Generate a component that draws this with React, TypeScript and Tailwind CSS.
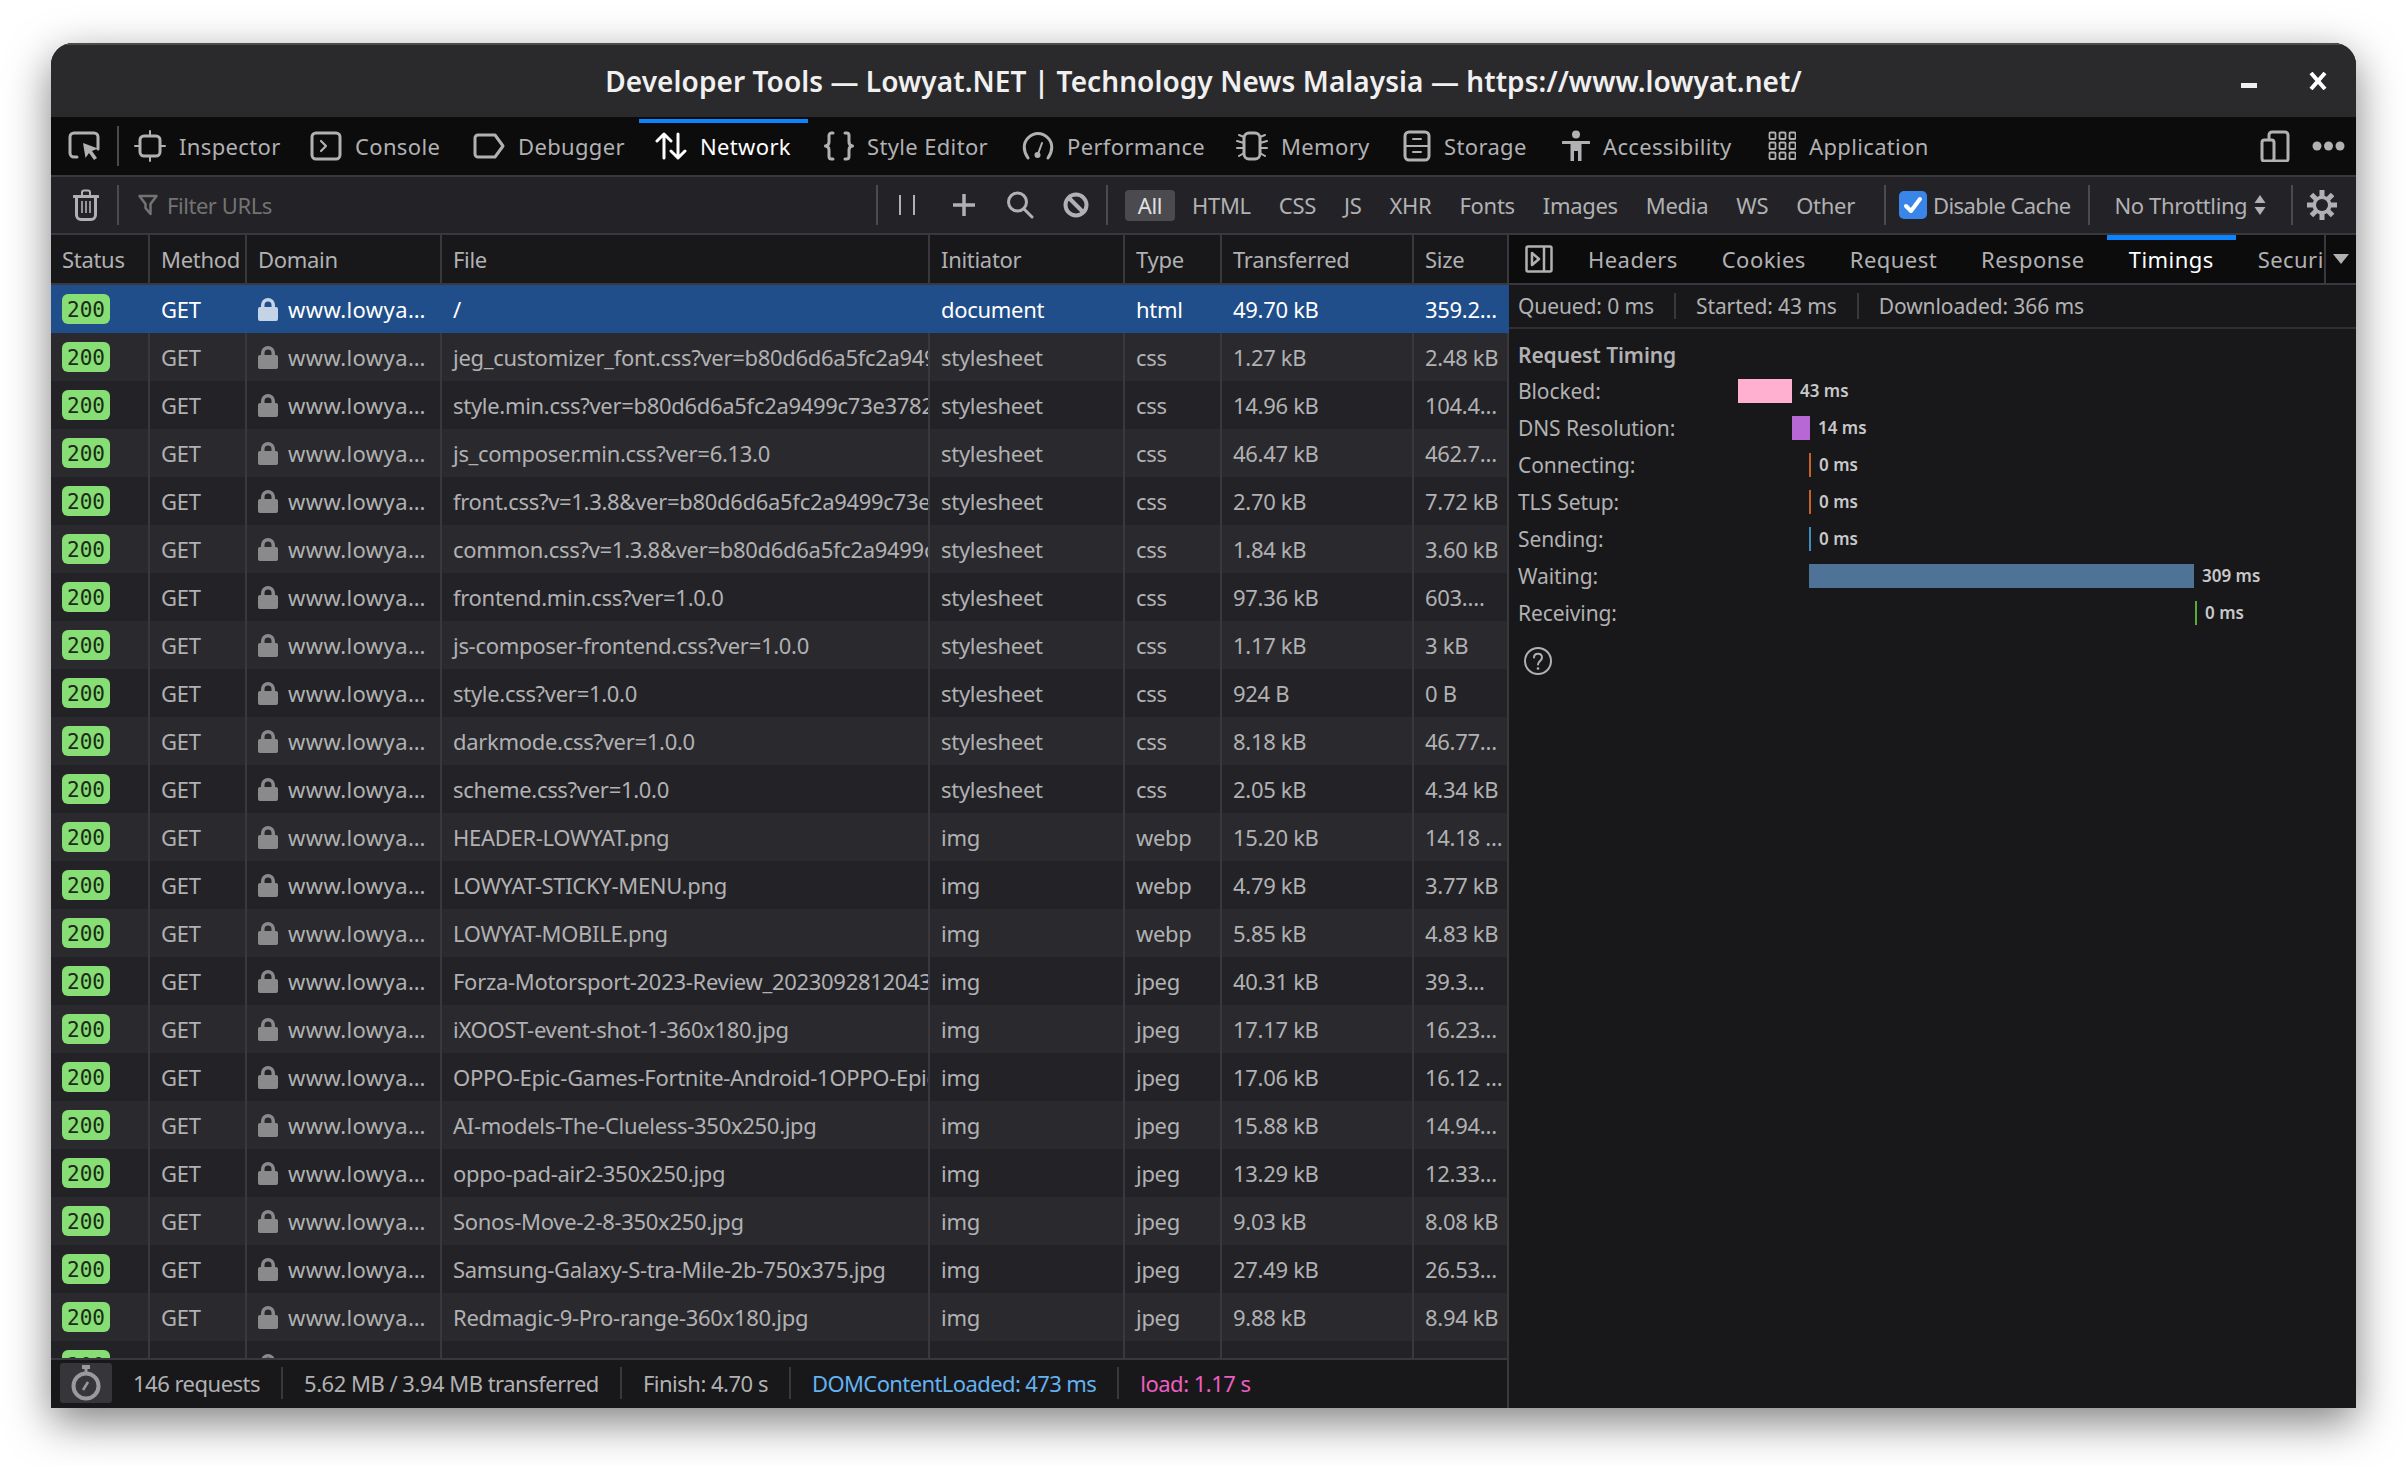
import React from "react";

const font = { fontFamily: '"Noto Sans", sans-serif' };

const S = ({ w, h, children, className = "" }: { w: number; h: number; children: React.ReactNode; className?: string }) => (
  <svg width={w} height={h} viewBox={`0 0 ${w} ${h}`} fill="none" stroke="currentColor" strokeWidth={3} strokeLinecap="round" strokeLinejoin="round" className={`shrink-0 ${className}`}>
    {children}
  </svg>
);

const PickIcon = () => (
  <S w={32} h={30}>
    <path d="M9 26H6a4 4 0 0 1-4-4V6a4 4 0 0 1 4-4h20a4 4 0 0 1 4 4v12" />
    <path d="M15 12l15 5.5-6 2.5 5 7-3 2-5-7-3.5 5z" fill="currentColor" stroke="none" />
  </S>
);
const InspectorIcon = () => (
  <S w={32} h={32}>
    <rect x="6" y="6" width="20" height="20" rx="4" />
    <path d="M16 1v5M16 26v5M1 16h5M26 16h5" strokeWidth={2} />
  </S>
);
const ConsoleIcon = () => (
  <S w={32} h={30}>
    <rect x="2" y="2" width="28" height="26" rx="4" />
    <path d="M11 10l5 5-5 5" strokeWidth={2.2} />
  </S>
);
const DebuggerIcon = () => (
  <S w={32} h={26}>
    <path d="M5 2h17l8 11-8 11H5a3 3 0 0 1-3-3V5a3 3 0 0 1 3-3z" />
  </S>
);
const NetworkIcon = () => (
  <S w={32} h={30} className="text-white">
    <path d="M9 27V3M2 10l7-7 7 7" />
    <path d="M23 3v24M16 20l7 7 7-7" />
  </S>
);
const StyleIcon = () => (
  <S w={30} h={30}>
    <path d="M9 2H7.500a2.500 2.500 0 0 0-2.500 2.500V11a4 4 0 0 1-3.500 4 4 4 0 0 1 3.500 4v6.500a2.500 2.500 0 0 0 2.500 2.500H9" />
    <path d="M21 2h1.500a2.500 2.500 0 0 1 2.500 2.500V11a4 4 0 0 0 3.500 4 4 4 0 0 0-3.500 4v6.500a2.500 2.500 0 0 1-2.500 2.500H21" />
  </S>
);
const PerfIcon = () => (
  <S w={32} h={30}>
    <path d="M6 27C1 20 1 12 6 7c6-6 14-6 20 0 5 5 5 13 0 20" />
    <path d="M16 23l4-11" strokeWidth={2} />
    <circle cx="15.500" cy="24" r="3" fill="currentColor" stroke="none" />
  </S>
);
const MemoryIcon = () => (
  <S w={32} h={30}>
    <rect x="8" y="2" width="16" height="26" rx="5" />
    <path d="M8 6L3 4M8 12L1 10M8 17H1M8 22L3 25M24 6l5-2M24 12l7-2M24 17h7M24 22l5 3" strokeWidth={2} />
  </S>
);
const StorageIcon = () => (
  <S w={28} h={32}>
    <rect x="2" y="2" width="24" height="28" rx="4" />
    <path d="M3 16h22" strokeWidth={2} />
    <path d="M10 9h8M10 22h8" strokeWidth={2} />
  </S>
);
const AccessIcon = () => (
  <svg width="28" height="32" viewBox="0 0 28 32" fill="currentColor" className="shrink-0">
    <circle cx="14" cy="4.500" r="4" />
    <path d="M1 11h26a1.500 1.500 0 0 1 0 3h-7.500v17h-3.500v-10h-4v10H8.500V14H1a1.500 1.500 0 0 1 0-3z" />
  </svg>
);
const AppIcon = () => (
  <S w={28} h={30}>
    {[2, 12, 22].flatMap((y) =>
      [2, 12, 22].map((x) => <rect key={`${x}-${y}`} x={x - 0.5} y={y - 0.5} width="6" height="6.500" rx="1" strokeWidth={1.8} />)
    )}
  </S>
);
const DeviceIcon = () => (
  <S w={30} h={32}>
    <path d="M9 9V5a3 3 0 0 1 3-3h13a3 3 0 0 1 3 3v24a2 2 0 0 1-2 2H14" />
    <rect x="2" y="10" width="12" height="21" rx="2.500" />
  </S>
);
const TrashIcon = () => (
  <S w={26} h={32}>
    <path d="M1 7.500h24" />
    <path d="M9 6V3.500a2 2 0 0 1 2-2h4a2 2 0 0 1 2 2V6" strokeWidth={2} />
    <path d="M3.500 8v18a4.500 4.500 0 0 0 4.500 4.500h10a4.500 4.500 0 0 0 4.500-4.500V8" />
    <path d="M9 12v12M13 12v12M17 12v12" strokeWidth={1.6} strokeLinecap="butt" />
  </S>
);
const FilterIcon = () => (
  <S w={20} h={22} className="text-[#737373]">
    <path d="M1.500 2h17L12.500 10v10L7.500 14V10z" strokeWidth={2.5} />
  </S>
);
const SearchIcon = () => (
  <S w={28} h={28}>
    <circle cx="11.500" cy="11" r="9" />
    <path d="M18 18l8 8" />
  </S>
);
const BlockIcon = () => (
  <S w={26} h={26} className="text-[#b1b1b3]">
    <circle cx="13" cy="13" r="10.500" strokeWidth={4} />
    <path d="M6 6l14 14" strokeWidth={4} strokeLinecap="butt" />
  </S>
);
const GearIcon = () => (
  <svg width="34" height="34" viewBox="0 0 34 34" className="shrink-0">
    <g stroke="#b1b1b3" strokeWidth="5" strokeLinecap="butt">
      {[0, 45, 90, 135].map((a) => (
        <line key={a} x1="17" y1="2" x2="17" y2="32" transform={`rotate(${a} 17 17)`} />
      ))}
    </g>
    <circle cx="17" cy="17" r="9.500" fill="#b1b1b3" />
    <circle cx="17" cy="17" r="6" fill="#232327" />
  </svg>
);

const tabs: [string, React.ReactNode, number, string][] = [
  ["Inspector", <InspectorIcon />, 0, "w-[176px]"],
  ["Console", <ConsoleIcon />, 0, "w-[163px]"],
  ["Debugger", <DebuggerIcon />, 0, "w-[182px]"],
  ["Network", <NetworkIcon />, 1, "w-[169px]"],
  ["Style Editor", <StyleIcon />, 0, "w-[198px]"],
  ["Performance", <PerfIcon />, 0, "w-[214px]"],
  ["Memory", <MemoryIcon />, 0, "w-[167px]"],
  ["Storage", <StorageIcon />, 0, "w-[159px]"],
  ["Accessibility", <AccessIcon />, 0, "w-[206px]"],
  ["Application", <AppIcon />, 0, "w-[194px]"],
];

const filters = ["HTML", "CSS", "JS", "XHR", "Fonts", "Images", "Media", "WS", "Other"];

const rows: [string, string, string, string, string][] = [
  ["/", "document", "html", "49.70 kB", "359.2…"],
  ["jeg_customizer_font.css?ver=b80d6d6a5fc2a9499c73e3782", "stylesheet", "css", "1.27 kB", "2.48 kB"],
  ["style.min.css?ver=b80d6d6a5fc2a9499c73e3782", "stylesheet", "css", "14.96 kB", "104.4…"],
  ["js_composer.min.css?ver=6.13.0", "stylesheet", "css", "46.47 kB", "462.7…"],
  ["front.css?v=1.3.8&ver=b80d6d6a5fc2a9499c73e3782", "stylesheet", "css", "2.70 kB", "7.72 kB"],
  ["common.css?v=1.3.8&ver=b80d6d6a5fc2a9499c73e3782", "stylesheet", "css", "1.84 kB", "3.60 kB"],
  ["frontend.min.css?ver=1.0.0", "stylesheet", "css", "97.36 kB", "603.…"],
  ["js-composer-frontend.css?ver=1.0.0", "stylesheet", "css", "1.17 kB", "3 kB"],
  ["style.css?ver=1.0.0", "stylesheet", "css", "924 B", "0 B"],
  ["darkmode.css?ver=1.0.0", "stylesheet", "css", "8.18 kB", "46.77…"],
  ["scheme.css?ver=1.0.0", "stylesheet", "css", "2.05 kB", "4.34 kB"],
  ["HEADER-LOWYAT.png", "img", "webp", "15.20 kB", "14.18 …"],
  ["LOWYAT-STICKY-MENU.png", "img", "webp", "4.79 kB", "3.77 kB"],
  ["LOWYAT-MOBILE.png", "img", "webp", "5.85 kB", "4.83 kB"],
  ["Forza-Motorsport-2023-Review_20230928120431-360x180.jpg", "img", "jpeg", "40.31 kB", "39.3…"],
  ["iXOOST-event-shot-1-360x180.jpg", "img", "jpeg", "17.17 kB", "16.23…"],
  ["OPPO-Epic-Games-Fortnite-Android-1OPPO-Epic-Games.jpg", "img", "jpeg", "17.06 kB", "16.12 …"],
  ["AI-models-The-Clueless-350x250.jpg", "img", "jpeg", "15.88 kB", "14.94…"],
  ["oppo-pad-air2-350x250.jpg", "img", "jpeg", "13.29 kB", "12.33…"],
  ["Sonos-Move-2-8-350x250.jpg", "img", "jpeg", "9.03 kB", "8.08 kB"],
  ["Samsung-Galaxy-S-tra-Mile-2b-750x375.jpg", "img", "jpeg", "27.49 kB", "26.53…"],
  ["Redmagic-9-Pro-range-360x180.jpg", "img", "jpeg", "9.88 kB", "8.94 kB"],
  ["", "", "", "", ""],
];

const timings: [string, number, number, string, string][] = [
  ["Blocked:", 0, 54, "#ffb0d0", "43 ms"],
  ["DNS Resolution:", 54, 18, "#b868d4", "14 ms"],
  ["Connecting:", 71, 2, "#c8602a", "0 ms"],
  ["TLS Setup:", 71, 2, "#c8602a", "0 ms"],
  ["Sending:", 71, 2, "#3a8ec2", "0 ms"],
  ["Waiting:", 71, 385, "#4f7297", "309 ms"],
  ["Receiving:", 457, 2, "#5aa838", "0 ms"],
];

const Sep = ({ className = "" }: { className?: string }) => <div className={`w-[2px] h-[40px] bg-[#4a4a4f] shrink-0 ${className}`} />;
const FootSep = () => <div className="w-[2px] h-[32px] bg-[#38383d] shrink-0" />;

const Cell = ({ children, sel }: { children?: React.ReactNode; sel: boolean }) => (
  <div className={`h-[48px] pl-[11px] flex items-center overflow-hidden whitespace-nowrap border-r-2 ${sel ? "border-transparent" : "border-[#38383d]"}`}>
    {children}
  </div>
);

export default function App() {
  return (
    <div className="w-[2406px] h-[1466px] bg-white pt-[43px] pl-[51px] overflow-hidden" style={font}>
      <div className="w-[2305px] h-[1365px] flex flex-col rounded-t-[22px] overflow-hidden bg-[#18181a] shadow-[0_14px_44px_rgba(0,0,0,0.5)] text-[22px] leading-[30px] text-[#b1b1b3] tracking-[-0.3px]">
        {/* title bar */}
        <div className="h-[74px] shrink-0 bg-[#2a2a2c] border-t-2 border-[#4c4c4e] grid grid-cols-[1fr_auto_1fr] items-center">
          <div />
          <div className="text-[28px] font-semibold text-[#f0f0f0] tracking-[0.07px]">
            Developer Tools — Lowyat.NET | Technology News Malaysia — https://www.lowyat.net/
          </div>
          <div className="flex items-center justify-end pr-[29px] gap-[52px] text-white">
            <svg width="16" height="5" viewBox="0 0 16 5" className="mt-[8px]"><rect width="16" height="5" fill="#f0f0f0" /></svg>
            <svg width="18" height="18" viewBox="0 0 18 18" stroke="#ffffff" strokeWidth="4"><path d="M2 1l14 16M16 1L2 17" /></svg>
          </div>
        </div>

        {/* tabs */}
        <div className="h-[60px] shrink-0 bg-[#0c0c0d] border-b-2 border-[#38383d] flex items-center tracking-[0.35px]">
          <div className="flex items-center h-full pl-[17px] -mr-[1px]">
            <PickIcon />
            <Sep className="ml-[17px]" />
          </div>
          {tabs.map(([label, icon, active, width]) => (
            <div key={label} className={`relative h-full flex items-center gap-[13px] pl-[16px] shrink-0 whitespace-nowrap ${width} ${active ? "text-white" : ""}`}>
              {active ? <div className="absolute left-0 right-0 top-[2px] h-[4px] bg-[#0a84ff]" /> : null}
              {icon}
              <span>{label}</span>
            </div>
          ))}
          <div className="ml-auto flex items-center gap-[22px] pr-[11px]">
            <DeviceIcon />
            <svg width="33" height="10" viewBox="0 0 33 10" fill="currentColor"><circle cx="5" cy="5" r="4.500" /><circle cx="16.500" cy="5" r="4.500" /><circle cx="28" cy="5" r="4.500" /></svg>
          </div>
        </div>

        {/* toolbar */}
        <div className="h-[58px] shrink-0 bg-[#232327] border-b-2 border-[#38383d] flex items-center">
          <div className="pl-[22px]"><TrashIcon /></div>
          <Sep className="ml-[18px]" />
          <div className="w-[757px] flex items-center gap-[9px] pl-[19px] text-[#737373] tracking-[-0.45px]">
            <FilterIcon />
            <span>Filter URLs</span>
          </div>
          <Sep />
          <div className="flex items-center pl-[21px] w-[228px]">
            <svg width="16" height="20" viewBox="0 0 16 20" stroke="currentColor" strokeWidth="2"><path d="M1 0v20M15 0v20" /></svg>
            <svg width="24" height="24" viewBox="0 0 24 24" stroke="currentColor" strokeWidth="3.5" className="ml-[37px]"><path d="M12 1v22M1 12h22" /></svg>
            <div className="ml-[30px]"><SearchIcon /></div>
            <div className="ml-[29px]"><BlockIcon /></div>
          </div>
          <Sep />
          <div className="flex items-center pl-[17px]">
            <div className="w-[50px] h-[31px] rounded-[4px] bg-[#4a4a4f] text-center text-[#e0e0e2] leading-[31px]">All</div>
            <div className="flex items-center pl-[3px]">
              {filters.map((f) => (
                <span key={f} className="px-[14px]">{f}</span>
              ))}
            </div>
          </div>
          <Sep className="ml-[15px]" />
          <div className="flex items-center gap-[6px] pl-[13px] pr-[17px] tracking-[-0.55px]">
            <div className="w-[28px] h-[28px] rounded-[5px] bg-[#3a86e8] flex items-center justify-center">
              <svg width="20" height="18" viewBox="0 0 20 18" fill="none" stroke="#fff" strokeWidth="4" strokeLinecap="round" strokeLinejoin="round"><path d="M3 10l5 5L17 3" /></svg>
            </div>
            <span>Disable Cache</span>
          </div>
          <Sep />
          <div className="flex items-center gap-[7px] pl-[25px] pr-[25px] tracking-[-0.4px]">
            <span>No Throttling</span>
            <svg width="12" height="22" viewBox="0 0 12 22" fill="currentColor"><path d="M6 1l5.500 8H.5zM6 21l5.500-8H.5z" /></svg>
          </div>
          <Sep />
          <div className="pl-[12px]"><GearIcon /></div>
        </div>

        {/* main split */}
        <div className="flex-1 min-h-0 flex">
          {/* left */}
          <div className="w-[1458px] shrink-0 flex flex-col">
            <div className="h-[50px] shrink-0 bg-[#18181a] border-b-2 border-[#38383d] grid grid-cols-[99px_97px_195px_488px_195px_97px_192px_95px]">
              {["Status", "Method", "Domain", "File", "Initiator", "Type", "Transferred", "Size"].map((h) => (
                <div key={h} className="pl-[11px] flex items-center border-r-2 border-[#38383d]">{h}</div>
              ))}
            </div>
            <div className="flex-1 min-h-0 overflow-hidden">
              {rows.map((r, i) => {
                const sel = i === 0;
                return (
                  <div key={i} className={`grid grid-cols-[99px_97px_195px_488px_195px_97px_192px_95px] ${sel ? "bg-[#204e8a] text-white" : i % 2 ? "bg-[#2a2a2e]" : "bg-[#232327]"}`}>
                    <Cell sel={sel}>
                      <span className="w-[48px] h-[30px] rounded-[6px] bg-[#86de74] text-[#1c2b18] text-center text-[21px] leading-[32px] tracking-normal" style={{ fontFamily: '"DejaVu Sans Mono", monospace' }}>200</span>
                    </Cell>
                    <Cell sel={sel}>GET</Cell>
                    <Cell sel={sel}>
                      <svg width="20" height="24" viewBox="0 0 20 24" className="shrink-0 mr-[10px]" fill={sel ? "#c5d3e6" : "#8a8a8d"}>
                        <path d="M3 10V8a7 7 0 0 1 14 0v2h1a2 2 0 0 1 2 2v10a2 2 0 0 1-2 2H2a2 2 0 0 1-2-2V12a2 2 0 0 1 2-2zm3.500 0h7V8a3.500 3.500 0 0 0-7 0z" />
                      </svg>
                      <span className="tracking-[0.4px]">www.lowya…</span>
                    </Cell>
                    <Cell sel={sel}>{r[0]}</Cell>
                    <Cell sel={sel}>{r[1]}</Cell>
                    <Cell sel={sel}>{r[2]}</Cell>
                    <Cell sel={sel}>{r[3]}</Cell>
                    <Cell sel={sel}>{r[4]}</Cell>
                  </div>
                );
              })}
            </div>
            {/* footer */}
            <div className="h-[50px] shrink-0 bg-[#18181a] border-t-2 border-r-2 border-[#38383d] flex items-center gap-[21px] pl-[9px] pb-[2px] tracking-[-0.5px]">
              <div className="w-[52px] h-[40px] rounded-[3px] bg-[#36363a] flex items-center justify-center">
                <svg width="30" height="36" viewBox="0 0 30 36" fill="none" stroke="#9a9a9d"><path d="M11 2h8" strokeWidth="4" /><path d="M15 3v5" strokeWidth="3" /><circle cx="15" cy="21" r="12.500" strokeWidth="4" /><path d="M12 25l5-8" strokeWidth="2.5" /></svg>
              </div>
              <span>146 requests</span>
              <FootSep />
              <span>5.62 MB / 3.94 MB transferred</span>
              <FootSep />
              <span>Finish: 4.70 s</span>
              <FootSep />
              <span className="text-[#64b2f0] tracking-[-0.6px]">DOMContentLoaded: 473 ms</span>
              <FootSep />
              <span className="text-[#ec5fc0]">load: 1.17 s</span>
            </div>
          </div>

          {/* right */}
          <div className="flex-1 min-w-0 flex flex-col bg-[#18181a]">
            <div className="h-[50px] shrink-0 bg-[#0c0c0d] border-b-2 border-[#38383d] flex tracking-[0.45px]">
              <div className="flex-1 min-w-0 overflow-hidden flex items-center border-r-2 border-[#38383d]">
                <div className="pl-[16px] pr-[13px] shrink-0">
                  <svg width="28" height="28" viewBox="0 0 28 28" fill="none" stroke="#b1b1b3" strokeWidth="2.5" strokeLinejoin="round"><rect x="1.500" y="1.500" width="25" height="25" rx="1.500" /><path d="M19 2v24" /><path d="M7 8l7 6-7 6z" /></svg>
                </div>
                {["Headers", "Cookies", "Request", "Response", "Timings", "Security"].map((t) => (
                  <div key={t} className={`relative h-full flex items-center px-[22px] shrink-0 ${t === "Timings" ? "text-white" : ""}`}>
                    {t === "Timings" ? <div className="absolute left-0 right-0 top-0 h-[5px] bg-[#0a84ff]" /> : null}
                    {t}
                  </div>
                ))}
              </div>
              <div className="w-[30px] shrink-0 flex items-center justify-center">
                <svg width="16" height="10" viewBox="0 0 16 10" fill="#b1b1b3"><path d="M0 0h16L8 10z" /></svg>
              </div>
            </div>
            <div className="h-[44px] shrink-0 border-b-2 border-[#2f2f33] flex items-center pl-[9px] gap-[20px] text-[21px] tracking-[-0.1px]">
              <span>Queued: 0 ms</span>
              <div className="w-[2px] h-[26px] bg-[#38383d]" />
              <span>Started: 43 ms</span>
              <div className="w-[2px] h-[26px] bg-[#38383d]" />
              <span>Downloaded: 366 ms</span>
            </div>
            <div className="pl-[9px] pt-[10px]">
              <div className="h-[32px] text-[21px] font-semibold leading-[32px] tracking-[-0.1px]">Request Timing</div>
              <div className="flex flex-col gap-[13px] pt-[8px]">
                {timings.map(([label, left, w, color, val]) => (
                  <div key={label} className="flex items-center h-[24px]">
                    <div className="w-[220px] shrink-0 text-[21px] tracking-[-0.1px] whitespace-nowrap">{label}</div>
                    <div className="flex items-center">
                      <div className="h-[24px] shrink-0" style={{ marginLeft: left, width: w, backgroundColor: color }} />
                      <span className="ml-[8px] text-[17px] font-semibold text-[#c8c8ca] tracking-[0px] whitespace-nowrap">{val}</span>
                    </div>
                  </div>
                ))}
              </div>
              <div className="pt-[22px] pl-[6px]">
                <svg width="28" height="28" viewBox="0 0 28 28" fill="none" stroke="#b1b1b3" strokeWidth="2"><circle cx="14" cy="14" r="13" /><path d="M10 10.500c0-5 8-5 8 0 0 3.500-4 3.500-4 7" strokeLinecap="round" /><circle cx="14" cy="21.500" r="1.300" fill="#b1b1b3" stroke="none" /></svg>
              </div>
            </div>
          </div>
        </div>
      </div>
    </div>
  );
}
